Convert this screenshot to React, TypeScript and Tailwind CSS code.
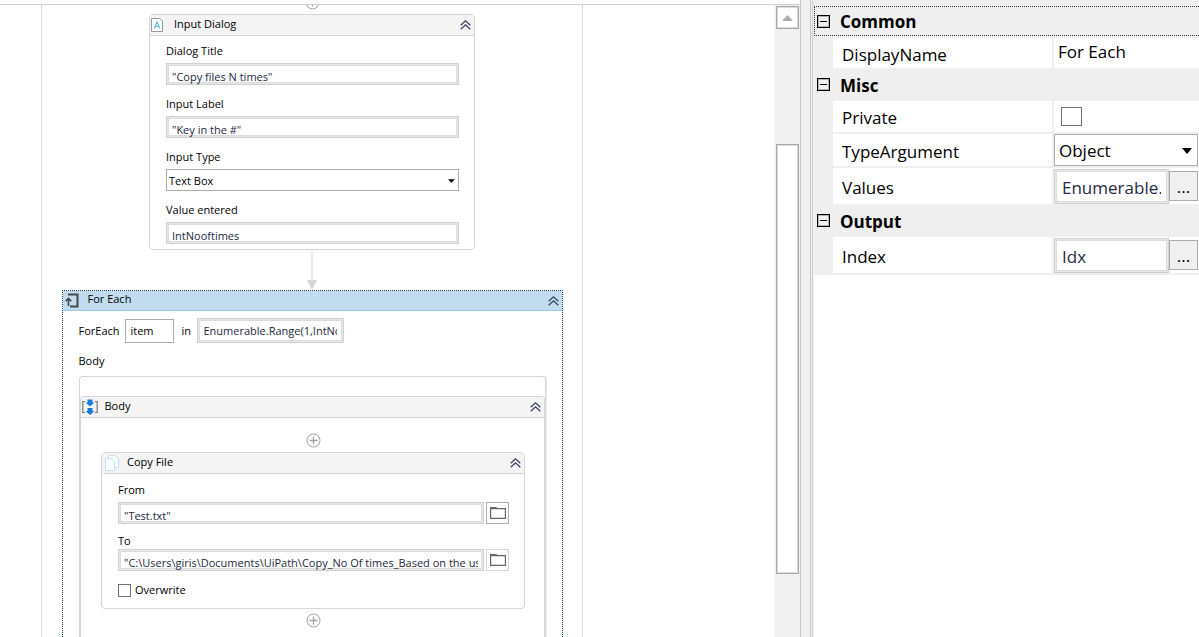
import { ReactNode } from "react";

const FIELD =
  "w-full min-w-0 border border-[#d0d0d0] bg-white text-[#1f2a44] outline-none shadow-[inset_0_0_0_1px_#e8e8e8,inset_0_0_0_2px_#dcdcdc]";

function CollapseIcon() {
  return (
    <svg width="11" height="10" viewBox="0 0 11 10" fill="none" stroke="#35405c" strokeWidth="1.2">
      <path d="M0.7 5.3 5.5 0.8 10.3 5.3M0.7 9.3 5.5 4.8 10.3 9.3" />
    </svg>
  );
}

function DialogIcon() {
  return (
    <svg width="12" height="14" viewBox="0 0 12 14" fill="none">
      <path d="M.5.5h8L11.5 3v10.500H.5z" fill="#fff" stroke="#9a9a9a" />
      <path d="M3.200 10.500 6 4l2.800 6.500M4.200 8.500h3.600" stroke="#5fb4dc" strokeWidth="1.100" />
    </svg>
  );
}

function LoopIcon() {
  return (
    <svg width="14" height="15" viewBox="0 0 14 15" fill="none" stroke="#484848">
      <path d="M3 1.500h9.500v12H5" strokeWidth="2" />
      <path d="M3.500 13V6M.7 8.200 3.500 5.400l2.800 2.800" strokeWidth="1.600" />
    </svg>
  );
}

function SequenceIcon() {
  return (
    <svg width="16" height="16" viewBox="0 0 16 16" fill="none">
      <path d="M3 2.500H.8v11H3M13 2.500h2.200v11H13" stroke="#777" strokeWidth="1.200" />
      <path d="M5.500.5h5V3.500h2L8 7.500 3.500 3.500h2zM5.500 9h5v3h2L8 16l-4.500-4h2z" fill="#1c7ad9" />
    </svg>
  );
}

function CopyIcon() {
  return (
    <svg width="14" height="16" viewBox="0 0 14 16" fill="#fafdfe" stroke="#bfe2ef">
      <path d="M3.500.5h6.500L13.500 3.500v9h-10z" />
      <path d="M.5 3.500h6L9.500 6.500v9H.5z" />
    </svg>
  );
}

function FolderIcon() {
  return (
    <svg width="18" height="14" viewBox="0 0 18 14" fill="none">
      <path d="M1 1h6.500l1 2H1z" fill="#666" />
      <path d="M1.600 2.600h14.800v9.800H1.600z" stroke="#666" strokeWidth="1.200" />
    </svg>
  );
}

function AddButton() {
  return (
    <button type="button" aria-label="Add activity" className="block">
      <svg width="15" height="15" viewBox="0 0 15 15" fill="none" stroke="#a3a3a3">
        <circle cx="7.500" cy="7.500" r="6.500" />
        <path d="M7.500 3.500v8M3.500 7.500h8" strokeWidth="1.300" />
      </svg>
    </button>
  );
}

function CardHeader({ icon, title, gap = "gap-[11px]" }: { icon: ReactNode; title: string; gap?: string }) {
  return (
    <header className="box-content flex h-5 items-center justify-between border-b border-[#d6d6d6] bg-[#f4f4f4] pr-[3px] pl-px">
      <div className={`flex items-center ${gap}`}>
        {icon}
        <h2 className="pb-0.5">{title}</h2>
      </div>
      <button type="button" aria-label={`Collapse ${title}`}>
        <CollapseIcon />
      </button>
    </header>
  );
}

function ExprInput({ id, value }: { id: string; value: string }) {
  return <input id={id} defaultValue={value} className={`${FIELD} block h-[22px] px-[5px] pt-[7px] pb-[3px]`} />;
}

function Field({ id, label, children }: { id: string; label: string; children: ReactNode }) {
  return (
    <div className="flex flex-col gap-0.5">
      <label htmlFor={id} className="block leading-5">
        {label}
      </label>
      {children}
    </div>
  );
}

function InputDialogCard() {
  return (
    <section className="w-[326px] rounded-sm border border-[#d6d6d6] bg-white">
      <CardHeader icon={<DialogIcon />} title="Input Dialog" />
      <div className="flex flex-col gap-[9px] pt-[5px] pr-[15px] pb-[5px] pl-4">
        <Field id="title" label="Dialog Title">
          <ExprInput id="title" value={'"Copy files N times"'} />
        </Field>
        <Field id="label" label="Input Label">
          <ExprInput id="label" value={'"Key in the #"'} />
        </Field>
        <Field id="type" label="Input Type">
          <div className="relative">
            <select id="type" className="block h-[22px] w-full appearance-none border border-[#acacac] bg-white px-0.5 pt-0.5">
              <option>Text Box</option>
            </select>
            <svg width="7" height="4" viewBox="0 0 8 4" className="pointer-events-none absolute top-[10px] right-1">
              <path d="M0 0h8L4 4z" fill="#000" />
            </svg>
          </div>
        </Field>
        <Field id="value" label="Value entered">
          <ExprInput id="value" value="IntNooftimes" />
        </Field>
      </div>
    </section>
  );
}

function PathRow({ id, label, value, strong, tight }: { id: string; label: string; value: string; strong?: boolean; tight?: boolean }) {
  return (
    <div>
      <label htmlFor={id} className={tight ? "block leading-4" : "block pb-0.5 leading-5"}>
        {label}
      </label>
      <div className="flex gap-0.5">
        <ExprInput id={id} value={value} />
        <button
          type="button"
          aria-label={`Browse ${label}`}
          className={`flex h-[22px] w-[23px] shrink-0 items-center justify-center border bg-white ${strong ? "border-[#acacac]" : "border-[#d6d6d6]"}`}
        >
          <FolderIcon />
        </button>
      </div>
    </div>
  );
}

function CopyFileCard() {
  return (
    <section className="w-[424px] rounded-sm border border-[#d6d6d6] bg-white">
      <div className="bg-[#f4f4f4] pl-0.5">
        <CardHeader icon={<CopyIcon />} title="Copy File" gap="gap-2" />
      </div>
      <div className="flex flex-col gap-[9px] pt-1.5 pr-[15px] pb-2.5 pl-4">
        <PathRow id="from" label="From" value={'"Test.txt"'} strong />
        <PathRow id="to" label="To" value={'"C:\\Users\\giris\\Documents\\UiPath\\Copy_No Of times_Based on the user input'} tight />
        <label className="flex items-center gap-1 pt-0.5">
          <input type="checkbox" className="size-[13px] appearance-none border border-[#707070] bg-white checked:bg-[#707070]" />
          Overwrite
        </label>
      </div>
    </section>
  );
}

function ForEachCard() {
  return (
    <section className="flex w-[501px] grow flex-col border border-b-0 border-dotted border-[#17405c] bg-white">
      <header className="flex h-5 shrink-0 items-center justify-between border-b border-[#9cc8e2] bg-[#c1dcee] pr-[3px] pl-0.5">
        <div className="flex items-center gap-[9px]">
          <LoopIcon />
          <h2 className="pb-[3px]">For Each</h2>
        </div>
        <button type="button" aria-label="Collapse For Each">
          <CollapseIcon />
        </button>
      </header>
      <div className="flex grow flex-col px-4 pt-[7px]">
        <div className="flex items-center">
          <label htmlFor="item" className="w-[46px]">
            ForEach
          </label>
          <input id="item" defaultValue="item" className="h-6 w-[49px] border border-[#acacac] bg-white px-[5px] outline-none" />
          <label htmlFor="collection" className="w-[23px] pl-2">
            in
          </label>
          <div className="w-[147px]">
            <input id="collection" defaultValue="Enumerable.Range(1,IntNooftimes)" className={`${FIELD} block h-[25px] px-1.5`} />
          </div>
        </div>
        <p className="pt-2 leading-5">Body</p>
        <div className="mt-[5px] flex grow flex-col rounded-t-sm border border-b-0 border-[#d6d6d6] pt-[19px] shadow-[1px_0_0_#e8e8e8]">
          <section className="flex grow flex-col rounded-t-sm border border-b-0 border-[#d6d6d6]">
            <CardHeader icon={<SequenceIcon />} title="Body" gap="gap-[7px]" />
            <div className="flex flex-col items-center pt-[15px] pl-0.5">
              <AddButton />
              <div className="pt-1">
                <CopyFileCard />
              </div>
              <div className="pt-1">
                <AddButton />
              </div>
            </div>
          </section>
        </div>
      </div>
    </section>
  );
}

function Designer() {
  return (
    <main className="flex min-w-0 grow flex-col overflow-hidden">
      <div className="h-[5px] shrink-0 border-b border-[#d0d0d0]" />
      <div className="flex min-h-0 grow overflow-hidden">
        <div className="ml-[41px] flex w-[542px] shrink-0 flex-col items-center border-x border-[#dadada]">
          <div className="-mt-[10px] shrink-0 pb-1">
            <AddButton />
          </div>
          <InputDialogCard />
          <svg width="10" height="40" viewBox="0 0 10 40" className="shrink-0">
            <path d="M5 1v30" stroke="#d6d6d6" />
            <path d="M0 30h10L5 40z" fill="#d6d6d6" />
          </svg>
          <ForEachCard />
        </div>
      </div>
    </main>
  );
}

function ScrollBar() {
  return (
    <div className="flex w-[26px] shrink-0 flex-col pt-1">
      <div className="flex grow flex-col items-center border-t border-[#d0d0d0] bg-[#f1f1f1] pt-px">
        <button
          type="button"
          aria-label="Scroll up"
          className="flex h-[23px] w-[23px] items-center justify-center border border-[#a8a8a8] bg-white shadow-[inset_0_0_0_1px_#dcdcdc]"
        >
          <svg width="11" height="6" viewBox="0 0 11 6">
            <path d="M0 6h11L5.500 0z" fill="#ababab" />
          </svg>
        </button>
        <div className="h-[18.200%] w-full" />
        <div className="h-[68.200%] w-[23px] border border-[#a8a8a8] bg-white shadow-[inset_0_0_0_1px_#dcdcdc]" />
      </div>
    </div>
  );
}

function Category({ title, focused }: { title: string; focused?: boolean }) {
  return (
    <div
      className={
        focused
          ? "mb-0.5 flex h-[30px] items-center gap-2.5 border border-r-0 border-dotted border-[#333] pl-0.5"
          : "flex h-[33px] items-center gap-2.5 pl-[3px]"
      }
    >
      <button
        type="button"
        aria-label={`Toggle ${title}`}
        className="flex size-[13px] shrink-0 items-center justify-center border border-black bg-[#f0f0f0] shadow-[inset_0_0_0_1px_#b0b0b0]"
      >
        <span className="h-px w-[7px] bg-black" />
      </button>
      <h3 className="pt-0.5 text-[17px] leading-6 font-bold">{title}</h3>
    </div>
  );
}

function Property({ id, name, height, children }: { id: string; name: string; height: string; children: ReactNode }) {
  return (
    <div className={`flex gap-0.5 pl-[19px] ${height}`}>
      <label htmlFor={id} className="flex w-[219px] shrink-0 items-center bg-white pt-[3px] pl-[9px]">
        {name}
      </label>
      <div className="flex min-w-0 grow items-center bg-white">{children}</div>
    </div>
  );
}

function ExprEditor({ id, value }: { id: string; value: string }) {
  return (
    <div className="flex w-full items-center pr-px">
      <input id={id} defaultValue={value} className={`${FIELD} h-[35px] grow px-[7px] pt-0.5`} />
      <button type="button" aria-label={`Edit ${id}`} className="h-[30px] w-[29px] shrink-0 border border-[#acacac] bg-[#f0f0f0] pt-0.5 leading-6">
        ...
      </button>
    </div>
  );
}

function Properties() {
  return (
    <aside className="flex w-[385px] shrink-0 flex-col bg-white text-[17px]">
      <div className="bg-[#efefef] pt-1.5 pb-0.5">
        <Category title="Common" focused />
        <Property id="displayName" name="DisplayName" height="h-[30px]">
          <input id="displayName" defaultValue="For Each" className="w-full bg-transparent px-1 pb-0.5 leading-6 outline-none" />
        </Property>
        <Category title="Misc" />
        <div className="flex flex-col gap-0.5">
          <Property id="private" name="Private" height="h-[31px]">
            <input id="private" type="checkbox" className="ml-[7px] h-[19px] w-[21px] appearance-none border border-[#707070] bg-white checked:bg-[#707070]" />
          </Property>
          <Property id="typeArgument" name="TypeArgument" height="h-8">
            <div className="relative w-full pr-px">
              <select id="typeArgument" className="block h-8 w-full appearance-none border border-[#acacac] bg-white px-1 pt-0.5 leading-6">
                <option>Object</option>
              </select>
              <svg width="10" height="6" viewBox="0 0 10 6" className="pointer-events-none absolute top-[14px] right-[7px]">
                <path d="M0 0h10L5 6z" fill="#000" />
              </svg>
            </div>
          </Property>
          <Property id="values" name="Values" height="h-9">
            <ExprEditor id="values" value="Enumerable.Range(1,IntNooftimes)" />
          </Property>
        </div>
        <Category title="Output" />
        <Property id="index" name="Index" height="h-9">
          <ExprEditor id="index" value="Idx" />
        </Property>
      </div>
    </aside>
  );
}

export default function App() {
  return (
    <div className="flex h-screen overflow-hidden bg-white font-['Open_Sans','Noto_Sans',sans-serif] text-[11px] leading-4 text-black">
      <Designer />
      <ScrollBar />
      <div className="flex w-[14px] shrink-0 gap-px border-l border-[#c8c8c8] bg-[#f0f0f0] pl-[9px]">
        <div className="w-px bg-[#c8c8c8]" />
        <div className="w-px bg-[#d0d0d0]" />
      </div>
      <Properties />
    </div>
  );
}
